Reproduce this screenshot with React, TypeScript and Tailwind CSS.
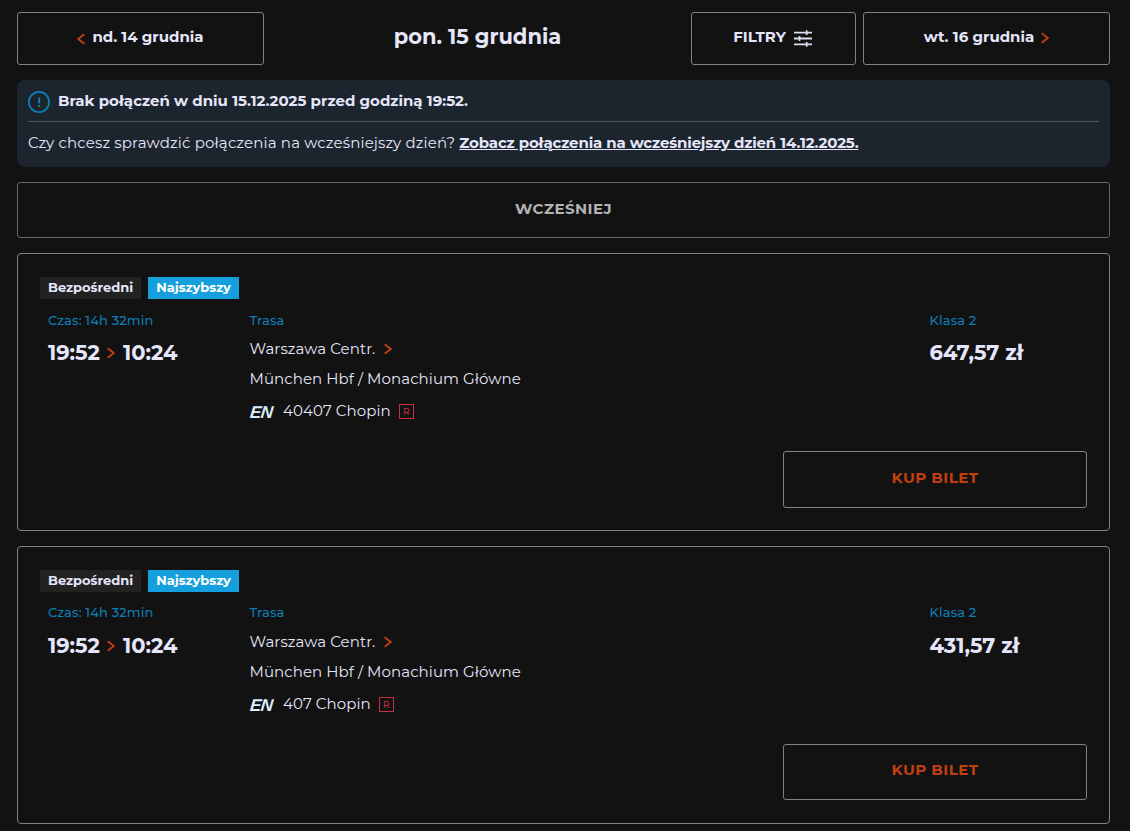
type Connection = { train: string; price: string; labelSize: string; buttonHeight: string };

const connections: Connection[] = [
  { train: "40407 Chopin", price: "647,57 zł", labelSize: "h-[21px] leading-[20px]", buttonHeight: "h-[57px] mb-[22px]" },
  { train: "407 Chopin", price: "431,57 zł", labelSize: "h-[21px] leading-[18px]", buttonHeight: "h-[56px] mb-[23px]" },
];

function Chevron({ left = false, className = "" }: { left?: boolean; className?: string }) {
  return (
    <svg viewBox="0 0 8 12" className={`w-2 h-3 shrink-0 ${className}`} fill="none" stroke="#c24010" strokeWidth="1.8">
      <path d={left ? "M7.3 1.3 1.2 6l6.1 4.7" : "M.7 1.3 6.8 6 .7 10.7"} />
    </svg>
  );
}

function FilterIcon() {
  return (
    <svg viewBox="0 0 18 17" className="w-[18px] h-[17px] mt-[3px] shrink-0" stroke="#dcdcee" strokeWidth="1.9" fill="none">
      <path d="M0 2.6h18M0 8.5h18M0 14.4h18" />
      <path d="M12.7.2V5M5.5 6.1v4.8M12.7 12v4.8" strokeWidth="1.7" />
    </svg>
  );
}

function AlertIcon() {
  return (
    <svg viewBox="0 0 22 22" className="w-[22px] h-[22px] mt-[3px] shrink-0" fill="none" stroke="#0c82b8">
      <circle cx="11" cy="11" r="10.1" strokeWidth="1.7" />
      <path d="M11.2 6.6v6M11.2 14v1.9" strokeWidth="1.9" />
    </svg>
  );
}

function TrainLogo() {
  return (
    <span className="mt-[3px] w-[24px] shrink-0 -skew-x-6 font-['Liberation_Sans',sans-serif] text-[17px] font-bold italic leading-[18px] tracking-[-0.6px] text-[#dcecfa]">
      EN
    </span>
  );
}

function ConnectionCard({ train, price, labelSize, buttonHeight }: Connection) {
  return (
    <article className="flex h-[278px] flex-col rounded-[4px] border border-[#828282] pl-[22px] pr-[22px] pt-[23px]">
      <div className="flex gap-[7px] text-[13px] font-bold leading-[21px]">
        <span className="h-[22px] w-[101px] bg-[#222222] text-center">Bezpośredni</span>
        <span className="h-[22px] w-[91px] bg-[#159fdc] text-center text-white">Najszybszy</span>
      </div>
      <div className="flex pl-2 pt-[11px]">
        <div className="w-[201.5px]">
          <div className={`text-[13px] font-medium tracking-[0.13px] text-[#0f7db3] ${labelSize}`}>Czas: 14h 32min</div>
          <div className="mt-[7px] flex items-center text-[21px] font-bold leading-[30px]">
            19:52
            <Chevron className="ml-[7px] mr-[8px]" />
            10:24
          </div>
        </div>
        <div className="w-[680px] text-[15px] tracking-[0.08px]">
          <div className={`text-[13px] font-medium tracking-[0.13px] text-[#0f7db3] ${labelSize}`}>Trasa</div>
          <div className="mt-[3px] flex h-[30px] items-center">
            Warszawa Centr.
            <Chevron className="ml-[8.5px]" />
          </div>
          <div className="flex h-[30px] items-center">München Hbf / Monachium Główne</div>
          <div className="mt-[2px] flex h-[30px] items-center">
            <TrainLogo />
            <span className="ml-[9.5px]">{train}</span>
            <span className="ml-[8px] mt-px grid h-[15px] w-[15px] place-items-center border border-[#c42f45] text-[9px] font-medium leading-none tracking-normal text-[#c42f45]">R</span>
          </div>
        </div>
        <div>
          <div className={`text-[13px] font-medium tracking-[0.13px] text-[#0f7db3] ${labelSize}`}>Klasa 2</div>
          <div className="mt-[7px] text-[21px] font-bold leading-[30px]">{price}</div>
        </div>
      </div>
      <button className={`mt-auto w-[304px] shrink-0 self-end rounded-[3px] border border-[#828282] pb-[3px] text-[15px] font-bold tracking-[0.45px] text-[#c24010] ${buttonHeight}`}>
        KUP BILET
      </button>
    </article>
  );
}

export default function App() {
  return (
    <main className="h-[831px] overflow-hidden bg-[#121212] pl-[17px] pr-[20px] pt-[12px] font-['Montserrat',sans-serif] text-[15px] text-[#e6e6fa]">
      <header className="flex h-[53px]">
        <button className="flex w-[247px] items-center justify-center rounded-[3px] border border-[#828282] pb-[3px] font-bold">
          <Chevron left className="mr-[7px] mt-[4px]" />
          nd. 14 grudnia
        </button>
        <h1 className="flex-1 pt-[9px] text-center text-[21px] font-bold leading-8">pon. 15 grudnia</h1>
        <button className="mr-[7px] flex w-[165px] items-center justify-center rounded-[3px] border border-[#828282] pb-[3px] pr-[2px] font-bold">
          <span className="mr-[8px]">FILTRY</span>
          <FilterIcon />
        </button>
        <button className="flex w-[247px] items-center justify-center rounded-[3px] border border-[#828282] pb-[3px] font-bold">
          wt. 16 grudnia
          <Chevron className="ml-[7px] mt-[2px]" />
        </button>
      </header>
      <section className="mt-[15px] h-[87px] rounded-[8px] bg-[#1c242d] px-[11px] pt-[8px]">
        <div className="flex h-[34px] border-b border-[#505861]">
          <AlertIcon />
          <strong className="ml-2 font-bold leading-[26px]">Brak połączeń w dniu 15.12.2025 przed godziną 19:52.</strong>
        </div>
        <p className="pt-[8px] leading-[26px]">
          <span className="tracking-[0.155px]">Czy chcesz sprawdzić połączenia na wcześniejszy dzień?</span>{" "}
          <a className="font-bold tracking-[-0.145px] underline">Zobacz połączenia na wcześniejszy dzień 14.12.2025.</a>
        </p>
      </section>
      <button className="mt-[15px] block h-[56px] w-full rounded-[3px] border border-[#666666] pb-px font-bold tracking-[0.45px] text-[#b3b3b3]">
        WCZEŚNIEJ
      </button>
      <div className="mt-[15px] flex flex-col gap-[15px]">
        {connections.map((c) => (
          <ConnectionCard key={c.train} {...c} />
        ))}
      </div>
    </main>
  );
}
